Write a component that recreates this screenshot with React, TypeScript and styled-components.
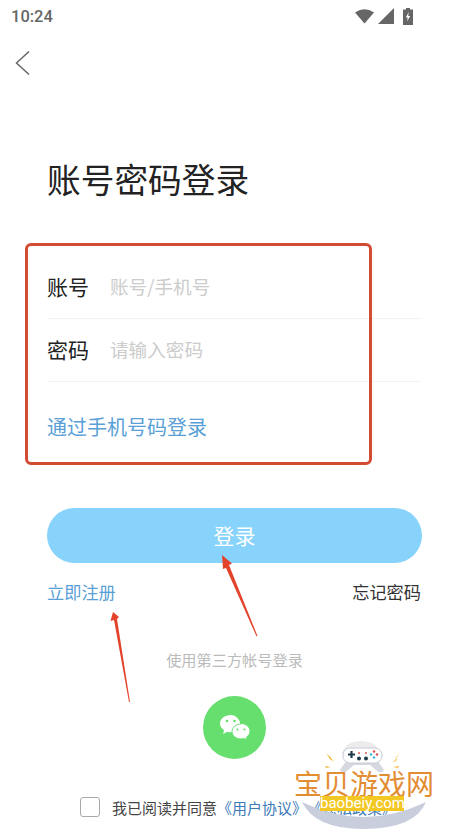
import React from "react";
import styled, { createGlobalStyle } from "styled-components";

const Global = createGlobalStyle`
  html, body { margin: 0; padding: 0; background: #fff; }
  * { box-sizing: border-box; }
  body { font-family: "Noto Sans CJK SC", "Noto Sans", sans-serif; }
`;
const Page = styled.div`
  position: relative; width: 469px; height: 834px; overflow: hidden; background: #fff;
  display: flex; flex-direction: column;
`;
const StatusBar = styled.div`
  height: 32px; padding: 0 56px 0 11px; display: flex; align-items: center; justify-content: space-between;
  color: #666; font: 500 16.5px Roboto, sans-serif;
`;
const StatusIcons = styled.div`display: flex; align-items: center; gap: 3px;`;
const BackBar = styled.div`height: 62px; padding: 18px 0 0 15px;`;
const Title = styled.h1`
  margin: 65px 0 0 47px; font-size: 33.7px; line-height: 40px; font-weight: 400; color: #222; height: 97px;
`;
const Form = styled.div`margin: 0 48px; display: flex; flex-direction: column;`;
const Row = styled.div`
  height: 63px; display: flex; align-items: center; border-bottom: 1px solid #f2f2f2; padding-bottom: 3px;
`;
const Label = styled.span`width: 62px; margin-left: -1px; font-size: 21px; color: #222;`;
const Placeholder = styled.span`font-size: 18.6px; margin-left: 1px; color: #ccc;`;
const PhoneLink = styled.div`margin: 27px 0 0 -1px; font-size: 20px; line-height: 36px; color: #5a9fd6; height: 69px;`;
const LoginButton = styled.button`
  margin: 30px 47px 0; height: 55px; border: 0; border-radius: 28px; background: #87d3fb; color: #fff;
  padding: 0 0 2px; font: 400 21px "Noto Sans CJK SC", sans-serif;
`;
const Links = styled.div`margin: 15px 48px 0; display: flex; justify-content: space-between; font-size: 17.2px; line-height: 28px; height: 28px;`;
const Register = styled.span`color: #5a9fd6; margin-left: -1px;`;
const Forgot = styled.span`color: #333;`;
const ThirdParty = styled.div`margin-top: 42px; text-align: center; font-size: 15.2px; line-height: 22px; color: #bbb;`;
const WeChatButton = styled.div`
  margin: 26px auto 0; width: 63px; height: 63px; border-radius: 50%; background: #66df6e;
  display: flex; align-items: center; justify-content: center;
`;
const Agreement = styled.div`
  margin: 37px 0 0 80px; display: flex; align-items: center; font-size: 15px; color: #444; white-space: nowrap; height: 22px;
`;
const Check = styled.span`width: 20px; height: 20px; border: 1px solid #aaa; border-radius: 3px; margin-right: 12px;`;
const Doc = styled.span`color: #3d7ab8;`;
const Highlight = styled.div`
  position: absolute; left: 25px; top: 243px; width: 347px; height: 222px;
  border: 3px solid #d24b33; border-radius: 6px; pointer-events: none;
`;
const Overlay = styled.svg`position: absolute; left: 0; top: 0; pointer-events: none;`;
const Watermark = styled.div`
  position: absolute; left: 290px; top: 740px; width: 150px; height: 94px;
`;
const Brand = styled.div`
  position: absolute; left: 4px; top: 27px; font-size: 28px; line-height: 32px; color: #e38d33; white-space: nowrap;
`;
const Domain = styled.div`
  position: absolute; left: 30px; top: 56px; width: 84px; height: 15px; background: #f3c824; color: #fff;
  font: 400 15px/15px Roboto, sans-serif; text-align: center; white-space: nowrap;
`;
const Art = styled.svg`position: absolute; left: 0; top: 0;`;

export default function App() {
  return (
    <Page>
      <Global />
      <StatusBar>
        <span>10:24</span>
        <StatusIcons>
          <svg width="20" height="16" viewBox="0 0 20 16"><path d="M0 4.500Q9.500-2 19 4.500L9.500 15.500Z" fill="#666" /></svg>
          <svg width="16" height="16" viewBox="0 0 16 16"><path d="M0 16L16 0V16Z" fill="#666" /></svg>
          <svg width="10" height="17" viewBox="0 0 10 17" style={{ marginLeft: 6 }}>
            <path d="M3 0h4v1.500h3V17H0V1.500h3Z" fill="#666" />
            <path d="M5.800 4L2.800 9.500h2L4 13.500l3.200-5.500h-2Z" fill="#fff" />
          </svg>
        </StatusIcons>
      </StatusBar>
      <BackBar>
        <svg width="16" height="26" viewBox="0 0 16 26"><path d="M14 1.500L1.500 13L14 24.500" fill="none" stroke="#666" strokeWidth="1.500" /></svg>
      </BackBar>
      <Title>账号密码登录</Title>
      <Form>
        <Row><Label>账号</Label><Placeholder>账号/手机号</Placeholder></Row>
        <Row><Label>密码</Label><Placeholder>请输入密码</Placeholder></Row>
        <PhoneLink>通过手机号码登录</PhoneLink>
      </Form>
      <LoginButton>登录</LoginButton>
      <Links><Register>立即注册</Register><Forgot>忘记密码</Forgot></Links>
      <ThirdParty>使用第三方帐号登录</ThirdParty>
      <WeChatButton>
        <svg width="32" height="28" viewBox="0 0 32 28">
          <path d="M12 1C5.500 1 1 5 1 9.500c0 2.800 1.600 5 4 6.500L4.200 20l4-2.300c1.300.4 2.600.6 4.400.6C15 18 22 14 21 8 19 4 16 1 12 1Z" fill="#fff" />
          <path d="M22 10c-5 0-9 3.300-9 7.500S17 25 22 25c1 0 2-.2 3-.5l3 1.500-.7-2.700c2.500-1.500 3.700-3.600 3.700-6.300 0-4-4-7.500-9-7.500Z" fill="#fff" stroke="#66df6e" strokeWidth="1" />
          <circle cx="8" cy="7" r="1.300" fill="#66df6e" /><circle cx="15.500" cy="7" r="1.300" fill="#66df6e" />
          <circle cx="18.500" cy="15.500" r="1.100" fill="#66df6e" /><circle cx="25.500" cy="15.500" r="1.100" fill="#66df6e" />
        </svg>
      </WeChatButton>
      <Agreement><Check />我已阅读并同意<Doc>《用户协议》</Doc><Doc>《隐私政策》</Doc></Agreement>

      <Highlight />
      <Overlay width="469" height="834" viewBox="0 0 469 834">
        <path d="M222 555L232 563.500L229 565L257.500 636L256.500 636.300L226 568L223 569Z" fill="#e4432b" />
        <path d="M113 612L119 617L117 619L130 702L129 702L114 620L110.500 621Z" fill="#e4432b" />
      </Overlay>
      <Watermark>
        <Art width="150" height="94" viewBox="0 0 150 94">
          <path d="M12 62Q73 92 136 62Q125 89 73 89Q25 89 12 62Z" fill="#c9cedd" />
          <path d="M52 14C54 4 62 1 71 1S88 4 90 14Z" fill="#ececec" />
          <path d="M57 20H87L94 30Q91 35 86 30L80 25H64L58 30Q53 35 50 30Z" fill="#d5d8de" />
          <rect x="53" y="8" width="39" height="15" rx="7" fill="#fff" stroke="#c9ccd6" strokeWidth="1" />
          <path d="M58 14.500h7M61.500 11v7" stroke="#1f3a4a" strokeWidth="2.200" />
          <circle cx="69" cy="18.500" r="2" fill="#1f3a4a" /><circle cx="76" cy="18.500" r="2" fill="#1f3a4a" />
          <circle cx="69" cy="13" r="1" fill="#e25555" /><circle cx="76" cy="13" r="1" fill="#e25555" />
          <circle cx="84" cy="11.500" r="1.300" fill="#e25555" /><circle cx="84" cy="17.500" r="1.300" fill="#3fb4e0" />
          <circle cx="81" cy="14.500" r="1.300" fill="#3fb4e0" /><circle cx="87" cy="14.500" r="1.300" fill="#e25555" />
          <path d="M36 13L40 17L39 15L44 22L40 19L41 21Z" fill="#f0bb44" />
          <path d="M35 26L41 27L36 28Z" fill="#f0bb44" />
          <path d="M110 13L105 18L107 18L102 23L107 20L106 18Z" fill="#f0bb44" />
          <path d="M109 26L103 27L108 28Z" fill="#f0bb44" />
        </Art>
        <Brand>宝贝游戏网</Brand>
        <Domain>baobeiy.com</Domain>
      </Watermark>
    </Page>
  );
}
